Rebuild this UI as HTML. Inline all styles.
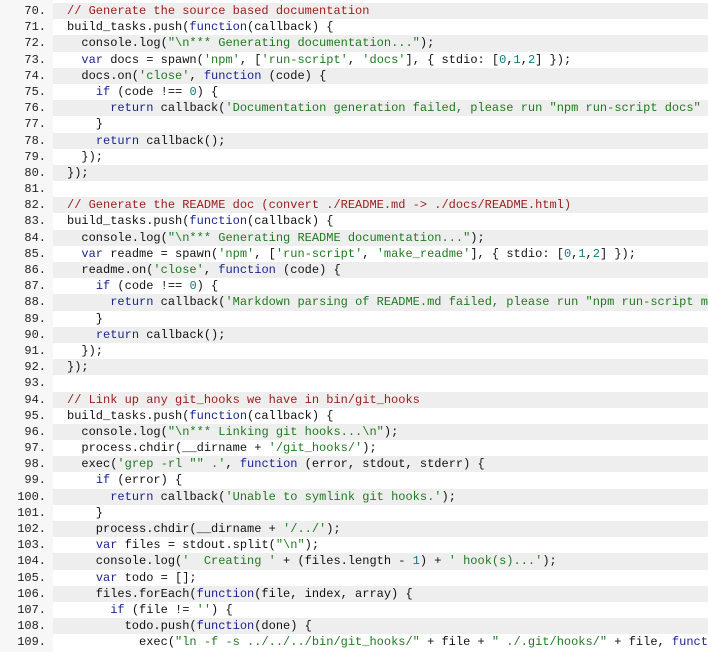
<!DOCTYPE html>
<html><head><meta charset="utf-8"><style>
html,body{margin:0;padding:0;background:#fff;width:708px;height:652px;overflow:hidden}
.w{position:relative;top:3px;font-family:"Liberation Mono",monospace;font-size:12px;width:708px;overflow:hidden}
.g{position:absolute;left:0;top:0;width:53px;height:652px;background:#f7f7f7}
.r{position:relative;height:16.2px;line-height:16.2px;white-space:pre;color:#111}
.r.e .c{background:#eeeeee}
.n{position:absolute;left:0;width:46px;text-align:right;color:#222}
.c{position:absolute;left:53px;width:655px;overflow:hidden;padding-left:14px;box-sizing:border-box;height:16.2px}
.k{color:#1a2490}.s{color:#1f7a1f}.m{color:#9e1a1a}.d{color:#0d7a7a}
</style></head><body><div class="g"></div><div class="w">
<div class="r e"><span class="n">70.</span><span class="c"><span class="m">// Generate the source based documentation</span></span></div>
<div class="r"><span class="n">71.</span><span class="c">build_tasks.push(<span class="k">function</span>(callback) {</span></div>
<div class="r e"><span class="n">72.</span><span class="c">  console.log(<span class="s">"\n*** Generating documentation..."</span>);</span></div>
<div class="r"><span class="n">73.</span><span class="c">  <span class="k">var</span> docs = spawn(<span class="s">'npm'</span>, [<span class="s">'run-script'</span>, <span class="s">'docs'</span>], { stdio: [<span class="d">0</span>,<span class="d">1</span>,<span class="d">2</span>] });</span></div>
<div class="r e"><span class="n">74.</span><span class="c">  docs.on(<span class="s">'close'</span>, <span class="k">function</span> (code) {</span></div>
<div class="r"><span class="n">75.</span><span class="c">    <span class="k">if</span> (code !== <span class="d">0</span>) {</span></div>
<div class="r e"><span class="n">76.</span><span class="c">      <span class="k">return</span> callback(<span class="s">'Documentation generation failed, please run "npm run-script docs" to see the error'</span>);</span></div>
<div class="r"><span class="n">77.</span><span class="c">    }</span></div>
<div class="r e"><span class="n">78.</span><span class="c">    <span class="k">return</span> callback();</span></div>
<div class="r"><span class="n">79.</span><span class="c">  });</span></div>
<div class="r e"><span class="n">80.</span><span class="c">});</span></div>
<div class="r"><span class="n">81.</span><span class="c"></span></div>
<div class="r e"><span class="n">82.</span><span class="c"><span class="m">// Generate the README doc (convert ./README.md -&gt; ./docs/README.html)</span></span></div>
<div class="r"><span class="n">83.</span><span class="c">build_tasks.push(<span class="k">function</span>(callback) {</span></div>
<div class="r e"><span class="n">84.</span><span class="c">  console.log(<span class="s">"\n*** Generating README documentation..."</span>);</span></div>
<div class="r"><span class="n">85.</span><span class="c">  <span class="k">var</span> readme = spawn(<span class="s">'npm'</span>, [<span class="s">'run-script'</span>, <span class="s">'make_readme'</span>], { stdio: [<span class="d">0</span>,<span class="d">1</span>,<span class="d">2</span>] });</span></div>
<div class="r e"><span class="n">86.</span><span class="c">  readme.on(<span class="s">'close'</span>, <span class="k">function</span> (code) {</span></div>
<div class="r"><span class="n">87.</span><span class="c">    <span class="k">if</span> (code !== <span class="d">0</span>) {</span></div>
<div class="r e"><span class="n">88.</span><span class="c">      <span class="k">return</span> callback(<span class="s">'Markdown parsing of README.md failed, please run "npm run-script make_readme"'</span>);</span></div>
<div class="r"><span class="n">89.</span><span class="c">    }</span></div>
<div class="r e"><span class="n">90.</span><span class="c">    <span class="k">return</span> callback();</span></div>
<div class="r"><span class="n">91.</span><span class="c">  });</span></div>
<div class="r e"><span class="n">92.</span><span class="c">});</span></div>
<div class="r"><span class="n">93.</span><span class="c"></span></div>
<div class="r e"><span class="n">94.</span><span class="c"><span class="m">// Link up any git_hooks we have in bin/git_hooks</span></span></div>
<div class="r"><span class="n">95.</span><span class="c">build_tasks.push(<span class="k">function</span>(callback) {</span></div>
<div class="r e"><span class="n">96.</span><span class="c">  console.log(<span class="s">"\n*** Linking git hooks...\n"</span>);</span></div>
<div class="r"><span class="n">97.</span><span class="c">  process.chdir(__dirname + <span class="s">'/git_hooks/'</span>);</span></div>
<div class="r e"><span class="n">98.</span><span class="c">  exec(<span class="s">'grep -rl "" .'</span>, <span class="k">function</span> (error, stdout, stderr) {</span></div>
<div class="r"><span class="n">99.</span><span class="c">    <span class="k">if</span> (error) {</span></div>
<div class="r e"><span class="n">100.</span><span class="c">      <span class="k">return</span> callback(<span class="s">'Unable to symlink git hooks.'</span>);</span></div>
<div class="r"><span class="n">101.</span><span class="c">    }</span></div>
<div class="r e"><span class="n">102.</span><span class="c">    process.chdir(__dirname + <span class="s">'/../'</span>);</span></div>
<div class="r"><span class="n">103.</span><span class="c">    <span class="k">var</span> files = stdout.split(<span class="s">"\n"</span>);</span></div>
<div class="r e"><span class="n">104.</span><span class="c">    console.log(<span class="s">'  Creating '</span> + (files.length - <span class="d">1</span>) + <span class="s">' hook(s)...'</span>);</span></div>
<div class="r"><span class="n">105.</span><span class="c">    <span class="k">var</span> todo = [];</span></div>
<div class="r e"><span class="n">106.</span><span class="c">    files.forEach(<span class="k">function</span>(file, index, array) {</span></div>
<div class="r"><span class="n">107.</span><span class="c">      <span class="k">if</span> (file != <span class="s">''</span>) {</span></div>
<div class="r e"><span class="n">108.</span><span class="c">        todo.push(<span class="k">function</span>(done) {</span></div>
<div class="r"><span class="n">109.</span><span class="c">          exec(<span class="s">"ln -f -s ../../../bin/git_hooks/"</span> + file + <span class="s">" ./.git/hooks/"</span> + file, <span class="k">function</span> (error) {</span></div>
</div></body></html>
